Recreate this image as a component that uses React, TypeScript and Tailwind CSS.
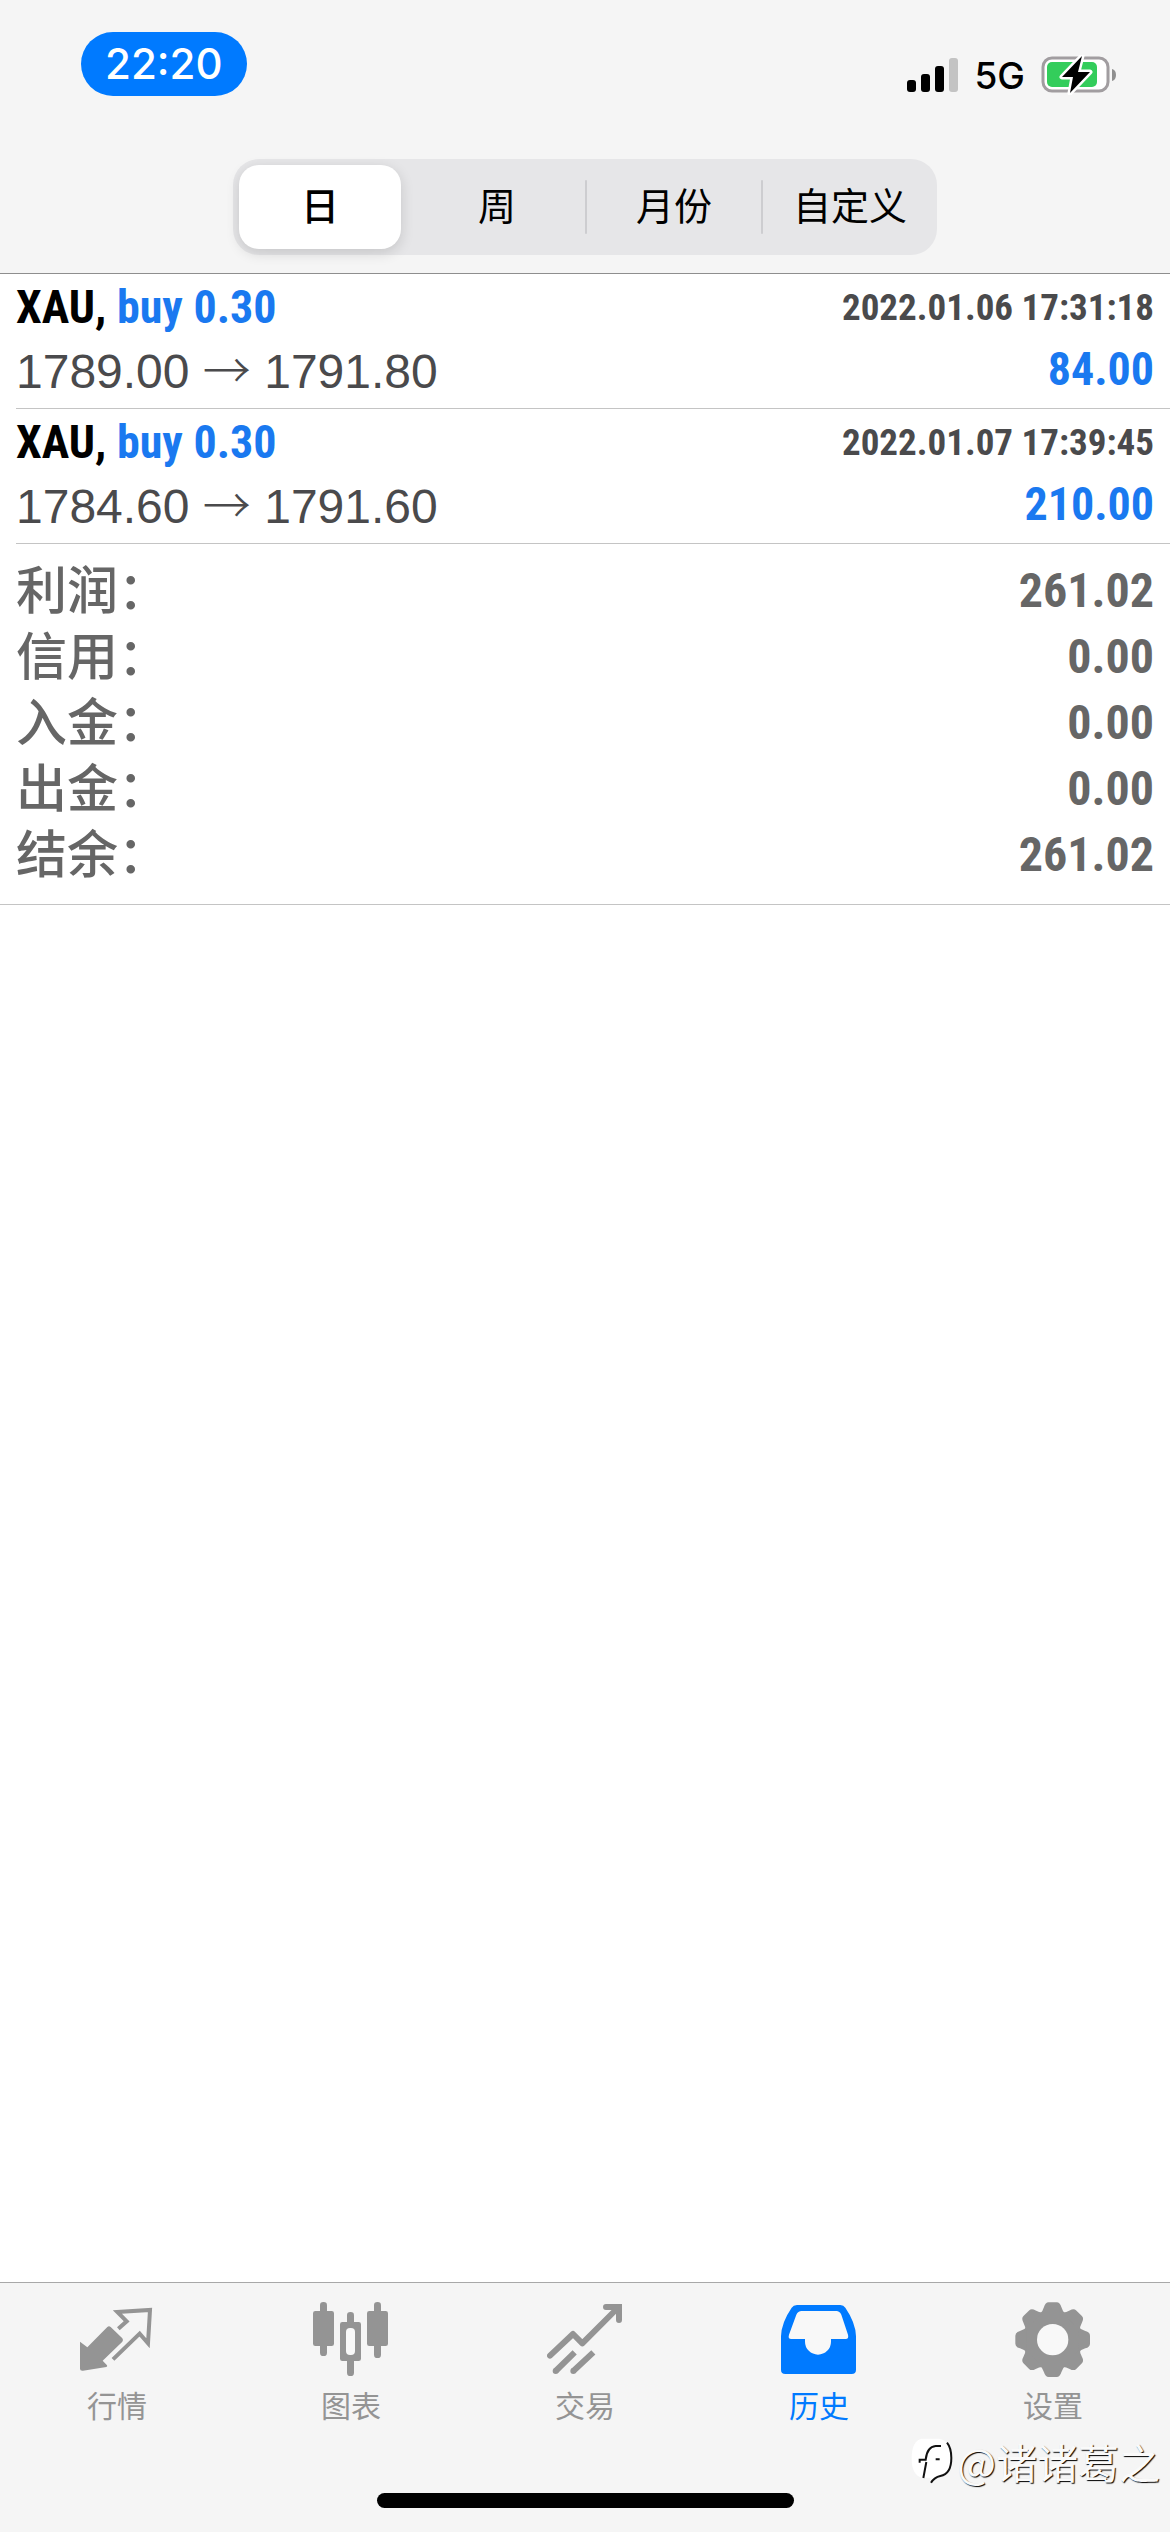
import { useState, type ReactNode } from "react"

const ranges = ["日", "周", "月份", "自定义"]

const deals = [
  {
    symbol: "XAU",
    side: "buy 0.30",
    open: "1789.00",
    close: "1791.80",
    time: "2022.01.06 17:31:18",
    profit: "84.00",
  },
  {
    symbol: "XAU",
    side: "buy 0.30",
    open: "1784.60",
    close: "1791.60",
    time: "2022.01.07 17:39:45",
    profit: "210.00",
  },
]

const totals = [
  { label: "利润", value: "261.02" },
  { label: "信用", value: "0.00" },
  { label: "入金", value: "0.00" },
  { label: "出金", value: "0.00" },
  { label: "结余", value: "261.02" },
]

function TabIcon({ children }: { children: ReactNode }) {
  return (
    <svg viewBox="0 0 228 228" className="h-[76px] w-[76px]" fill="currentColor" aria-hidden="true">
      {children}
    </svg>
  )
}

function QuotesIcon() {
  return (
    <TabIcon>
      <path d="M3 119 25 136 85 75Q90 70 95 75L130 109Q134 114 130 119L71 176 84 190Q86 193 82 195L12 206Q3 207 3 200Z" />
      <path
        d="M118 80 143 58 115 30 213 24 207 124 182 95 102 172"
        fill="none"
        stroke="currentColor"
        strokeWidth="12"
      />
    </TabIcon>
  )
}

function ChartIcon() {
  return (
    <TabIcon>
      <rect x="21" y="0" width="21" height="162" rx="10" />
      <rect x="0" y="27" width="63" height="105" rx="7" />
      <rect x="102" y="30" width="21" height="192" rx="10" />
      <rect x="81" y="60" width="63" height="117" rx="7" />
      <rect x="99" y="78" width="27" height="81" rx="12" className="fill-[#f8f8f8]" />
      <rect x="183" y="0" width="21" height="168" rx="10" />
      <rect x="162" y="27" width="63" height="105" rx="7" />
    </TabIcon>
  )
}

function TradeIcon() {
  return (
    <TabIcon>
      <g fill="none" stroke="currentColor" strokeWidth="18">
        <path d="M9 161 78 96 106 124 212 18" strokeLinecap="round" strokeLinejoin="round" />
        <path d="M177 15H216V54" strokeLinecap="round" />
        <path d="M26 207 83 151M79 207 139 151" />
      </g>
      <circle cx="26" cy="207" r="9" />
      <circle cx="79" cy="207" r="9" />
    </TabIcon>
  )
}

function HistoryIcon() {
  return (
    <TabIcon>
      <path d="M48 9H178Q188 9 193 17 224 62 225 103V203Q225 216 212 216H13Q0 216 0 203V103Q1 62 32 17 37 9 48 9Z" />
      <path
        d="M62 27H166Q176 27 181 38L201 98Q204 111 194 111H150V119A39 39 0 0 1 72 119V111H31Q20 111 24 98L46 38Q51 27 62 27Z"
        className="fill-[#f8f8f8]"
      />
    </TabIcon>
  )
}

function SettingsIcon() {
  const tooth = "M-38-78Q-30-84-26-98-22-112-12-112H12Q22-112 26-98 30-84 38-78Z"
  return (
    <TabIcon>
      <g transform="translate(113 113)">
        <circle r="86" />
        {[0, 45, 90, 135, 180, 225, 270, 315].map((angle) => (
          <path key={angle} d={tooth} transform={`rotate(${angle})`} />
        ))}
        <circle r="47" className="fill-[#f8f8f8]" />
      </g>
    </TabIcon>
  )
}

const tabs = [
  { label: "行情", icon: <QuotesIcon /> },
  { label: "图表", icon: <ChartIcon /> },
  { label: "交易", icon: <TradeIcon /> },
  { label: "历史", icon: <HistoryIcon /> },
  { label: "设置", icon: <SettingsIcon /> },
]

function StatusBar() {
  return (
    <div className="flex items-start justify-between pt-8 pr-[53px] pl-[81px] font-['Inter',sans-serif]">
      <div className="flex h-16 items-center rounded-full bg-[#007aff] px-6 text-[42px] leading-none font-medium text-white">
        22:20
      </div>
      <div className="flex h-[86px] items-center">
        <svg viewBox="0 0 51 34" className="h-[34px] w-[51px]" aria-hidden="true">
          <rect x="0" y="22" width="9" height="12" rx="3" />
          <rect x="14" y="16" width="9" height="18" rx="3" />
          <rect x="28" y="8" width="9" height="26" rx="3" />
          <rect x="42" y="0" width="9" height="34" rx="3" fill="#c3c3c3" />
        </svg>
        <span className="ml-4 text-[37px] leading-none font-medium">5G</span>
        <svg viewBox="0 0 76 40" className="ml-4 h-10 w-[76px]" aria-hidden="true">
          <rect x="2" y="3" width="65" height="33" rx="9" fill="#fff" stroke="#a19da0" strokeWidth="3" />
          <rect x="6" y="7" width="50" height="25" rx="5" fill="#33cd5b" />
          <path d="M71 14Q75 15 75 20T71 26Z" fill="#8f8f8f" />
          <path
            d="M41 1 21 22H32L29 38 49 17H37Z"
            stroke="#fff"
            strokeWidth="5"
            strokeLinejoin="round"
            paintOrder="stroke"
          />
        </svg>
      </div>
    </div>
  )
}

export default function App() {
  const [range, setRange] = useState("日")
  const [tab, setTab] = useState("历史")

  return (
    <div className="relative flex min-h-screen flex-col bg-white font-['Liberation_Sans','Noto_Sans_CJK_SC',sans-serif] text-black">
      <header className="border-b border-[#8e8e8e] bg-[#f5f5f5] pb-[18px]">
        <StatusBar />
        {/* Period switch */}
        <div className="mx-auto mt-[41px] grid h-24 w-[704px] max-w-full grid-cols-4 rounded-[26px] bg-[#e6e6e8]">
          {ranges.map((name, i) => (
            <button key={name} onClick={() => setRange(name)} className="flex items-center">
              {i > 1 && <span className="h-[54px] w-[2px] rounded-full bg-[#cdcdd0]" />}
              <span
                className={`flex flex-1 items-center justify-center text-[38px] leading-none whitespace-nowrap ${
                  range === name
                    ? "mr-2 ml-[6px] h-[84px] rounded-[20px] bg-white font-medium shadow-[0_4px_14px_rgba(0,0,0,0.14)]"
                    : ""
                }`}
              >
                {name}
              </span>
            </button>
          ))}
        </div>
      </header>

      <main className="flex-1">
        <ul>
          {deals.map((deal) => (
            <li key={deal.time} className="ml-4 border-b border-[#c4c4c4] pt-[2px] pr-4 pb-2">
              <div className="flex h-[62px] items-center justify-between font-['Roboto_Condensed',sans-serif] font-bold">
                <span className="text-[46px] leading-none">
                  {deal.symbol}, <span className="text-[#1a79f0]">{deal.side}</span>
                </span>
                <time className="text-[37px] leading-none text-[#4a4a4c]">{deal.time}</time>
              </div>
              <div className="flex h-[62px] items-center justify-between text-[48px] leading-none">
                <span className="text-[#4a4a4c]">
                  {deal.open}{" "}
                  <span className="font-['Noto_Sans_CJK_SC',sans-serif] leading-none font-light">→</span>{" "}
                  {deal.close}
                </span>
                <span className="font-['Roboto_Condensed',sans-serif] text-[46px] font-bold text-[#1a79f0]">
                  {deal.profit}
                </span>
              </div>
            </li>
          ))}
        </ul>

        {/* Totals */}
        <dl className="border-b border-[#c4c4c4] px-4 pt-[14px] pb-4 text-[#666]">
          {totals.map((row) => (
            <div key={row.label} className="flex h-[66px] items-center justify-between leading-none">
              <dt className="text-[51px] font-medium">{row.label}：</dt>
              <dd className="font-['Roboto_Condensed',sans-serif] text-[48px] font-bold">{row.value}</dd>
            </div>
          ))}
        </dl>
      </main>

      <nav className="border-t border-[#a8a8a8] bg-[#f5f5f5] pt-[19px] pb-6">
        <div className="grid grid-cols-5">
          {tabs.map(({ label, icon }) => (
            <button
              key={label}
              onClick={() => setTab(label)}
              className={`flex flex-col items-center gap-[14px] text-[30px] leading-[30px] ${
                tab === label ? "text-[#007aff]" : "text-[#949494]"
              }`}
            >
              {icon}
              <span>{label}</span>
            </button>
          ))}
        </div>
        {/* Home indicator */}
        <div className="mx-auto mt-[71px] h-[15px] w-[417px] rounded-full bg-black" />
      </nav>

      {/* Watermark */}
      <div className="absolute right-[10px] bottom-11 flex items-center gap-1">
        <svg viewBox="0 0 126 138" className="h-[46px] w-[42px]" aria-hidden="true">
          <path
            d="M32 2H84Q122 8 122 60 122 112 88 117 72 119 60 134L58 119H34Q2 112 2 62 2 8 32 2Z"
            fill="#fff"
          />
          <path
            d="M108 14Q121 30 121 60 121 108 88 114 70 118 60 134"
            fill="none"
            stroke="#111"
            strokeWidth="6"
          />
          <path
            d="M37 120 46 72M26 74V65H44Q48 26 74 24H90M74 64H86"
            fill="none"
            stroke="#111"
            strokeWidth="6"
          />
        </svg>
        <span className="font-['Noto_Sans_CJK_SC',sans-serif] text-[41px] leading-[54px] text-[#fafafa] [text-shadow:1px_1px_1px_#000]">
          @诸诸葛之
        </span>
      </div>
    </div>
  )
}
